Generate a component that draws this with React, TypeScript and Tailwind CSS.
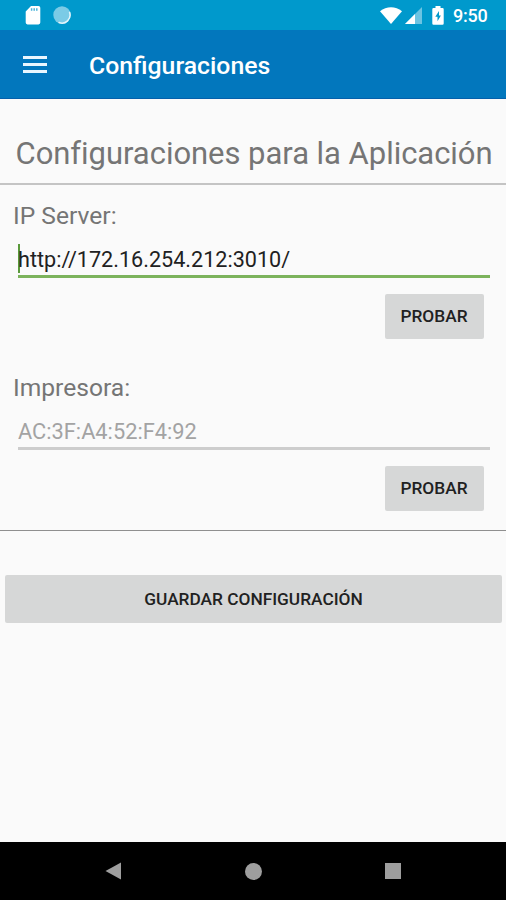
import React, { useState } from 'react';

interface FieldProps {
  label: string;
  value: string;
  onChange: (value: string) => void;
  active?: boolean;
}

function StatusBar() {
  return (
    <div className="flex h-[30px] shrink-0 items-center justify-between bg-[#0099cc] pl-[25px] pr-[19px] text-white">
      <div className="flex items-center gap-[12px]">
        <svg width="16" height="20" viewBox="0 0 16 20" fill="none">
          <path d="M6 1h7.500a1.800 1.800 0 0 1 1.800 1.800v14.800a1.800 1.800 0 0 1-1.800 1.800h-11a1.800 1.800 0 0 1-1.800-1.800V6.500z" fill="#fff" />
          <path d="M6.600 3.200v2.600M9.200 3.200v2.600M11.800 3.200v2.600" stroke="#4bb4da" strokeWidth="1.500" />
        </svg>
        <svg width="18" height="18" viewBox="0 0 18 18">
          <circle cx="9" cy="9" r="8.700" fill="#7bcbe6" />
          <path d="M16.600 6.500a8 8 0 0 1-10.500 10" fill="none" stroke="#e3f5fb" strokeWidth="1.500" strokeLinecap="round" />
        </svg>
      </div>
      <div className="flex items-center">
        <svg width="22" height="17" viewBox="0 0 22 17" fill="#fff">
          <path d="M0 4.200C6.500-1 15.500-1 22 4.200L11 17z" />
        </svg>
        <svg className="ml-[3px]" width="17" height="17" viewBox="0 0 17 17">
          <path d="M17 0v17H0z" fill="#6cc4e2" />
          <path d="M10 7v10H0z" fill="#fff" />
        </svg>
        <svg className="ml-[10px]" width="12" height="19" viewBox="0 0 12 19">
          <path d="M3.500 0h5v2H10.500a1.200 1.200 0 0 1 1.200 1.200v14.300a1.200 1.200 0 0 1-1.200 1.200h-9A1.200 1.200 0 0 1 .3 17.500V3.200A1.200 1.200 0 0 1 1.500 2h2z" fill="#fff" />
          <path d="M7 5L3.300 10.700h2.200V15.200L8.900 9.400H7z" fill="#0099cc" />
        </svg>
        <span className="ml-[9px] mt-[2px] w-[34px] whitespace-nowrap text-[18px] font-medium leading-none tracking-[-0.2px]">9:50</span>
      </div>
    </div>
  );
}

function AppBar() {
  return (
    <header className="flex h-[69px] shrink-0 items-center border-b border-[#0560ab] bg-[#0277bd] pl-[23px] text-white">
      <button type="button" aria-label="Menu" className="mt-px flex w-6 flex-col gap-[4px]">
        <span className="h-[3px] w-full bg-[#e9f6ff]" />
        <span className="h-[3px] w-full bg-[#e9f6ff]" />
        <span className="h-[3px] w-full bg-[#e9f6ff]" />
      </button>
      <h1 className="ml-[42px] mt-[4px] text-[24.8px] font-medium leading-[30px]">Configuraciones</h1>
    </header>
  );
}

function Field({ label, value, onChange, active }: FieldProps) {
  return (
    <section className={active ? 'h-[172px] pt-[14px]' : 'h-[173px] pt-[14px]'}>
      <label className="block h-[34px] pl-[13px] text-[24.6px] leading-[34px] text-[#757575]">{label}</label>
      <div
        className={
          active
            ? 'ml-[18px] mr-[16px] mt-[10px] flex h-[35px] border-b-[3px] border-[#7cb35c]'
            : 'ml-[18px] mr-[16px] mt-[10px] flex h-[35px] border-b-[3px] border-[#cdcdcd]'
        }
      >
        {active && <span className="-mr-[2px] mt-[1px] h-[29px] w-[2px] shrink-0 bg-[#5a9a3b]" />}
        <input
          value={value}
          onChange={(e) => onChange(e.target.value)}
          className={
            active
              ? 'mt-px h-[32px] w-full bg-transparent text-[21.6px] text-[#212121] outline-none'
              : 'mt-px h-[32px] w-full bg-transparent text-[21.8px] text-[#a3a3a3] outline-none'
          }
        />
      </div>
      <div className="mt-[16px] flex justify-end pr-[22px]">
        <button type="button" className="h-[45px] w-[99px] rounded-[2px] bg-[#d6d7d7] pr-px text-[17.3px] font-medium text-[#212121]">
          PROBAR
        </button>
      </div>
    </section>
  );
}

function NavBar() {
  return (
    <nav className="flex h-[58px] shrink-0 items-center justify-between bg-black pl-[105px] pr-[105px]">
      <svg width="17" height="18" viewBox="0 0 17 18" fill="#9e9e9e">
        <path d="M16 .5v17L.5 9z" />
      </svg>
      <span className="size-[17px] rounded-full bg-[#9e9e9e]" />
      <span className="size-4 bg-[#9e9e9e]" />
    </nav>
  );
}

export default function App() {
  const [server, setServer] = useState('http://172.16.254.212:3010/');
  const [printer, setPrinter] = useState('AC:3F:A4:52:F4:92');

  return (
    <div className="flex h-[900px] w-[506px] flex-col overflow-hidden bg-[#fafafa] font-[Roboto,sans-serif]">
      <StatusBar />
      <AppBar />
      <main className="flex-grow">
        <h2 className="h-[86px] whitespace-nowrap border-b-2 border-[#c4c4c4] pl-[15.5px] pt-[35px] text-[31px] leading-[40px] tracking-[-0.04px] text-[#757575]">
          Configuraciones para la Aplicación
        </h2>
        <Field label="IP Server:" value={server} onChange={setServer} active />
        <Field label="Impresora:" value={printer} onChange={setPrinter} />
        <div className="border-t border-[#8f8f8f] pl-[5px] pr-[4px] pt-[44px]">
          <button type="button" className="h-[48px] w-full rounded-[2px] bg-[#d6d7d7] pt-px text-[17.3px] font-medium text-[#212121]">
            GUARDAR CONFIGURACIÓN
          </button>
        </div>
      </main>
      <NavBar />
    </div>
  );
}
